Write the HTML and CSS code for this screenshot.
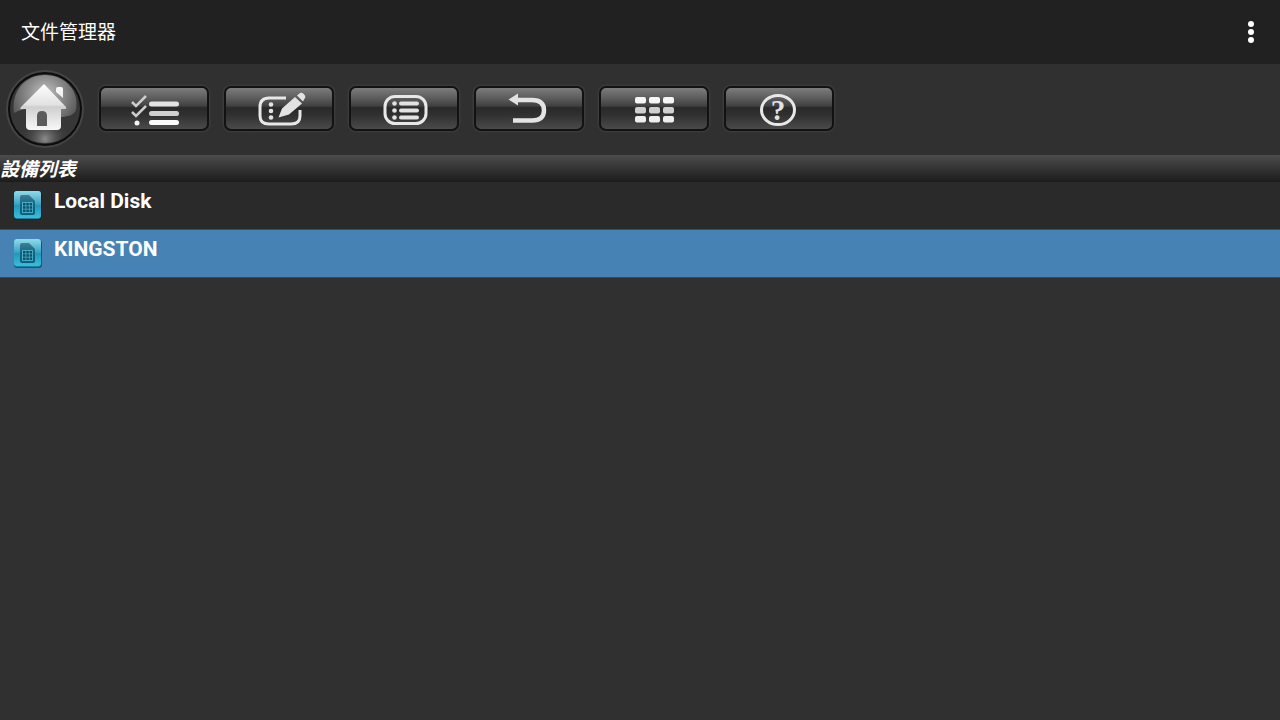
FILE: index.html
```html
<!DOCTYPE html>
<html lang="zh-Hant">
<head>
    <meta charset="UTF-8">
    <meta name="viewport" content="width=device-width, initial-scale=1.0">
    <title>文件管理器</title>
    <link rel="stylesheet" href="styles.css">
</head>
<body>
    <header class="title-bar">
        <h1 lang="zh-Hans">文件管理器</h1>
        <button class="menu-button" type="button" aria-label="More options">
            <svg width="8" height="24" viewBox="0 0 8 24">
                <circle cx="4" cy="4" r="3"/>
                <circle cx="4" cy="12" r="3"/>
                <circle cx="4" cy="20" r="3"/>
            </svg>
        </button>
    </header>

    <nav class="toolbar">
        <button class="home-button" type="button" aria-label="Home">
            <svg width="84" height="84" viewBox="0 0 84 84">
                <defs>
                    <radialGradient id="glassTop" gradientUnits="userSpaceOnUse" cx="42" cy="27" r="34">
                        <stop offset="0" stop-color="#c4c4c4"/>
                        <stop offset="0.45" stop-color="#929292"/>
                        <stop offset="1" stop-color="#5c5c5c"/>
                    </radialGradient>
                    <radialGradient id="glassBottom" gradientUnits="userSpaceOnUse" cx="42" cy="72" r="26">
                        <stop offset="0" stop-color="#8c8c8c"/>
                        <stop offset="1" stop-color="#303030" stop-opacity="0"/>
                    </radialGradient>
                    <linearGradient id="house" x1="0" y1="0" x2="0" y2="1">
                        <stop offset="0" stop-color="#ffffff"/>
                        <stop offset="0.45" stop-color="#e2e2e2"/>
                        <stop offset="0.5" stop-color="#cfcfcf"/>
                        <stop offset="1" stop-color="#f8f8f8"/>
                    </linearGradient>
                </defs>
                <circle cx="42" cy="42" r="39" fill="#454545"/>
                <circle cx="42" cy="42" r="37" fill="#0c0c0c"/>
                <circle cx="42" cy="42" r="35" fill="#373737"/>
                <circle cx="42" cy="42" r="34" fill="url(#glassBottom)"/>
                <path d="M11 46C8 24 22 8 42 8s35 16 31 35c-2 5-8 7-16 7-12 1-20-7-32-8-6 0-10 2-14 4z" fill="url(#glassTop)"/>
                <path d="M41 17L63 40q1 2-2 2h-3v17q0 4-4 4H27q-4 0-4-4V42h-4q-3 0-1-2zM53 22q0-2 2-2h3q2 0 2 2v9l-7-6z" fill="url(#house)"/>
                <path d="M34 59V49q0-5 5-5t5 5v10z" fill="#5c5c5c"/>
            </svg>
        </button>
        <button class="tool-button" type="button" aria-label="Select">
            <svg viewBox="0 0 110 44">
                <path class="check" d="M33 15l4 4 10-10M33 25l4 4 10-10"/>
                <circle cx="38" cy="36" r="2.5" fill="#f4f4f4"/>
                <rect x="50" y="14.5" width="30" height="5" rx="2.5" fill="#e2e2e2"/>
                <rect x="50" y="24" width="30" height="5" rx="2.5" fill="#cfcfcf"/>
                <rect x="50" y="33" width="30" height="5" rx="2.5" fill="#fafafa"/>
            </svg>
        </button>
        <button class="tool-button" type="button" aria-label="Edit">
            <svg viewBox="0 0 110 44">
                <path class="line" d="M62 11H45q-9 0-9 9v9q0 8 9 8h22q9 0 9-8v-6"/>
                <circle cx="47" cy="17.5" r="2.3"/>
                <circle cx="47" cy="24" r="2.3"/>
                <circle cx="47" cy="30.5" r="2.3"/>
                <path d="M54.5 30.500l3.500-9L71 10l7 6.500L65 27.500zM73 8.500l3-2.500q2-1 3.500.7l1.500 1.800q1 1.700-.5 3.200L79 14.500z"/>
            </svg>
        </button>
        <button class="tool-button" type="button" aria-label="List">
            <svg viewBox="0 0 110 44">
                <rect class="line" x="36" y="9.5" width="41" height="27" rx="10"/>
                <circle cx="45.5" cy="16.5" r="2.3"/>
                <circle cx="45.5" cy="23.5" r="2.3"/>
                <circle cx="45.5" cy="30.5" r="2.3"/>
                <rect x="50" y="14.5" width="20" height="4" rx="2"/>
                <rect x="50" y="21.5" width="20" height="4" rx="2"/>
                <rect x="50" y="28.5" width="20" height="4" rx="2"/>
            </svg>
        </button>
        <button class="tool-button" type="button" aria-label="Back">
            <svg viewBox="0 0 110 44">
                <path class="arrow" d="M41 13h17q12 0 12 10.300T58 33.500H39"/>
                <path d="M34.5 12.500l9.500-6v12z"/>
            </svg>
        </button>
        <button class="tool-button" type="button" aria-label="Grid">
            <svg viewBox="0 0 110 44">
                <g fill="#f6f6f6">
                    <rect x="36" y="10" width="11" height="6.5" rx="2"/>
                    <rect x="50" y="10" width="11" height="6.5" rx="2"/>
                    <rect x="64" y="10" width="11" height="6.5" rx="2"/>
                </g>
                <g fill="#cfcfcf">
                    <rect x="36" y="20" width="11" height="6.5" rx="2"/>
                    <rect x="50" y="20" width="11" height="6.5" rx="2"/>
                    <rect x="64" y="20" width="11" height="6.5" rx="2"/>
                </g>
                <g fill="#eeeeee">
                    <rect x="36" y="29" width="11" height="6.5" rx="2"/>
                    <rect x="50" y="29" width="11" height="6.5" rx="2"/>
                    <rect x="64" y="29" width="11" height="6.5" rx="2"/>
                </g>
            </svg>
        </button>
        <button class="tool-button" type="button" aria-label="Help">
            <svg viewBox="0 0 110 44">
                <ellipse class="line" cx="54" cy="23" rx="16.5" ry="14.5"/>
                <text class="question" x="54" y="33">?</text>
            </svg>
        </button>
    </nav>

    <main>
        <h2 class="list-title">設備列表</h2>
        <ul class="device-list">
            <li>
                <a class="device" href="#local">
                    <svg class="device-icon" width="30" height="30" viewBox="0 0 30 30">
                        <defs>
                            <linearGradient id="tile" x1="0" y1="0" x2="0" y2="1">
                                <stop offset="0" stop-color="#8fdcea"/>
                                <stop offset="0.45" stop-color="#42a9c4"/>
                                <stop offset="0.55" stop-color="#2398b9"/>
                                <stop offset="1" stop-color="#35c0df"/>
                            </linearGradient>
                            <linearGradient id="card" x1="0" y1="0" x2="0" y2="1">
                                <stop offset="0" stop-color="#3f7f93"/>
                                <stop offset="0.5" stop-color="#17627f"/>
                                <stop offset="1" stop-color="#125c7c"/>
                            </linearGradient>
                        </defs>
                        <g id="disk">
                            <rect x="1" y="2" width="28" height="28" rx="3" fill="#000" opacity="0.4"/>
                            <rect x="1" y="1" width="27" height="28" rx="3" fill="#1582a2"/>
                            <rect x="1" y="1" width="27" height="27" rx="3" fill="url(#tile)"/>
                            <path d="M7 7q0-2 2-2h7l6 6v12q0 2-2 2H9q-2 0-2-2z" fill="url(#card)"/>
                            <path d="M9 12h11v11H9z" fill="#49adc5"/>
                            <path d="M10 13h2.500v2.500H10zM13.300 13h2.500v2.500h-2.500zM16.600 13h2.500v2.500h-2.500zM10 16.300h2.500v2.500H10zM13.300 16.300h2.500v2.500h-2.500zM16.600 16.300h2.500v2.500h-2.500zM10 19.600h2.500v2.500H10zM13.300 19.600h2.500v2.500h-2.500zM16.600 19.600h2.500v2.500h-2.500z" fill="#0b506e"/>
                        </g>
                    </svg>
                    <span>Local Disk</span>
                </a>
            </li>
            <li>
                <a class="device selected" href="#kingston">
                    <svg class="device-icon" width="30" height="30" viewBox="0 0 30 30"><use href="#disk"/></svg>
                    <span>KINGSTON</span>
                </a>
            </li>
        </ul>
    </main>
</body>
</html>
```
FILE: styles.css
```css
* {
    box-sizing: border-box;
}
body {
    margin: 0;
    min-height: 100vh;
    background-color: #303030;
    color: #fff;
    font-family: Roboto, "Noto Sans CJK TC", sans-serif;
}
h1, h2, ul {
    margin: 0;
    padding: 0;
}
button {
    padding: 0;
    border: none;
    background: none;
    cursor: pointer;
}
svg {
    display: block;
}

/* Title bar */
.title-bar {
    display: flex;
    align-items: center;
    justify-content: space-between;
    height: 64px;
    padding: 0 22px 0 21px;
    background-color: #212121;
}
h1 {
    font-family: Roboto, "Noto Sans CJK SC", sans-serif;
    font-size: 19px;
    font-weight: 400;
    line-height: 26px;
    padding-top: 2px;
}
.menu-button {
    width: 14px;
    display: flex;
    justify-content: center;
}
.menu-button svg {
    fill: #fff;
}

/* Toolbar */
.toolbar {
    display: flex;
    align-items: center;
    gap: 15px;
    height: 91px;
    padding: 0 3px 2px;
}
.home-button {
    margin-right: -3px;
}
.tool-button {
    width: 110px;
    height: 45px;
    border: 2px solid #121212;
    border-radius: 7px;
    background: linear-gradient(#7c7c7c, #5c5c5c 25%, #404040 44%, #292929 48%, #303030 65%, #4a4a4a);
    box-shadow: 0 0 2px 1px #404040;
}
.tool-button svg {
    width: 110px;
    height: 44px;
    margin: -2px;
    fill: #e2e2e2;
}
.tool-button .line {
    fill: none;
    stroke: #e8e8e8;
    stroke-width: 3;
}
.tool-button .check {
    fill: none;
    stroke: #cccccc;
    stroke-width: 2.5;
}
.tool-button .arrow {
    fill: none;
    stroke: #e4e4e4;
    stroke-width: 4.5;
}
.tool-button .question {
    font-family: "Liberation Serif", serif;
    font-size: 29px;
    font-weight: 700;
    text-anchor: middle;
}

/* Device list */
.list-title {
    height: 27px;
    padding: 1px 0 0;
    background: linear-gradient(#4c4c4c, #1c1c1c);
    font-size: 19px;
    font-style: italic;
    line-height: 27px;
}
.device-list {
    list-style: none;
}
.device {
    display: flex;
    gap: 11px;
    height: 48px;
    padding: 0 13px;
    border-bottom: 1px solid #484848;
    background-color: #2a2a2a;
    color: #fff;
    font-size: 21px;
    font-weight: 700;
    line-height: 38px;
    text-decoration: none;
}
.device.selected {
    background-color: #4682b4;
}
.device-icon {
    margin-top: 8px;
}
```
